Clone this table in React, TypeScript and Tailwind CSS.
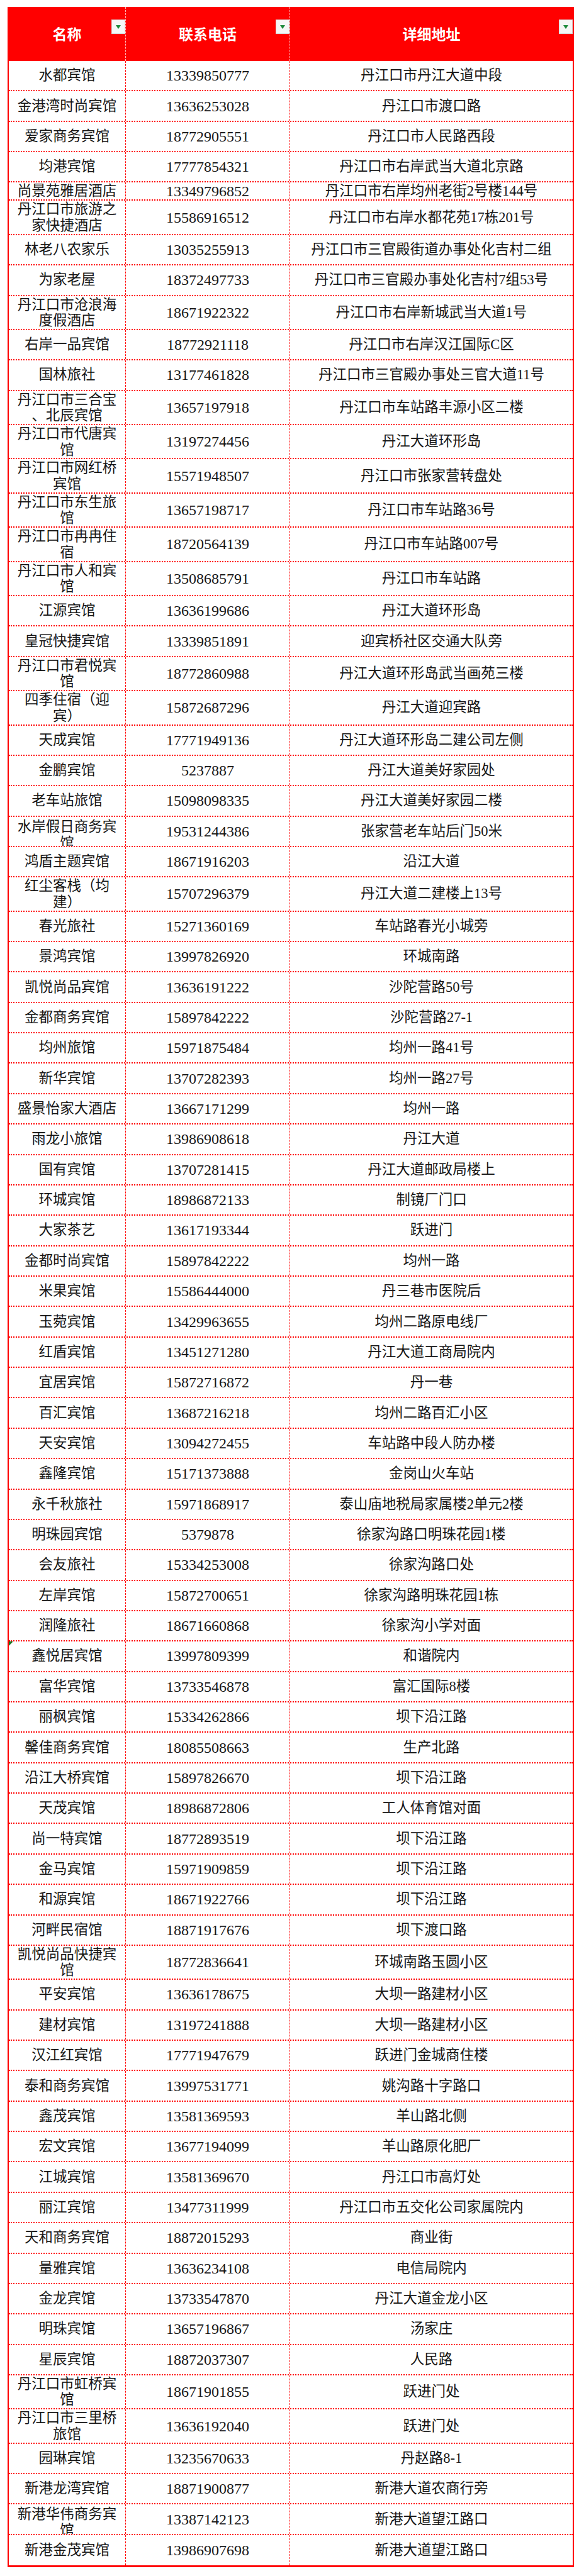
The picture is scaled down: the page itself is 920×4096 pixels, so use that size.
import React from "react";

type RowT = "s" | "d" | "x" | "c";
type Row = { n: string | string[]; p: string; a: string; t: RowT; g?: boolean };

const rows: Row[] = [
  { n: "水都宾馆", p: "13339850777", a: "丹江口市丹江大道中段", t: "s" },
  { n: "金港湾时尚宾馆", p: "13636253028", a: "丹江口市渡口路", t: "s" },
  { n: "爱家商务宾馆", p: "18772905551", a: "丹江口市人民路西段", t: "s" },
  { n: "均港宾馆", p: "17777854321", a: "丹江口市右岸武当大道北京路", t: "s" },
  { n: "尚景苑雅居酒店", p: "13349796852", a: "丹江口市右岸均州老街2号楼144号", t: "x" },
  { n: ["丹江口市旅游之", "家快捷酒店"], p: "15586916512", a: "丹江口市右岸水都花苑17栋201号", t: "d" },
  { n: "林老八农家乐", p: "13035255913", a: "丹江口市三官殿街道办事处化吉村二组", t: "s" },
  { n: "为家老屋", p: "18372497733", a: "丹江口市三官殿办事处化吉村7组53号", t: "s" },
  { n: ["丹江口市沧浪海", "度假酒店"], p: "18671922322", a: "丹江口市右岸新城武当大道1号", t: "d" },
  { n: "右岸一品宾馆", p: "18772921118", a: "丹江口市右岸汉江国际C区", t: "s" },
  { n: "国林旅社", p: "13177461828", a: "丹江口市三官殿办事处三官大道11号", t: "s" },
  { n: ["丹江口市三合宝", "、北辰宾馆"], p: "13657197918", a: "丹江口市车站路丰源小区二楼", t: "d" },
  { n: ["丹江口市代唐宾", "馆"], p: "13197274456", a: "丹江大道环形岛", t: "d" },
  { n: ["丹江口市网红桥", "宾馆"], p: "15571948507", a: "丹江口市张家营转盘处", t: "d" },
  { n: ["丹江口市东生旅", "馆"], p: "13657198717", a: "丹江口市车站路36号", t: "d" },
  { n: ["丹江口市冉冉住", "宿"], p: "18720564139", a: "丹江口市车站路007号", t: "d" },
  { n: ["丹江口市人和宾", "馆"], p: "13508685791", a: "丹江口市车站路", t: "d" },
  { n: "江源宾馆", p: "13636199686", a: "丹江大道环形岛", t: "s" },
  { n: "皇冠快捷宾馆", p: "13339851891", a: "迎宾桥社区交通大队旁", t: "s" },
  { n: ["丹江口市君悦宾", "馆"], p: "18772860988", a: "丹江大道环形岛武当画苑三楼", t: "d" },
  { n: ["四季住宿（迎", "宾）"], p: "15872687296", a: "丹江大道迎宾路", t: "d" },
  { n: "天成宾馆", p: "17771949136", a: "丹江大道环形岛二建公司左侧", t: "s" },
  { n: "金鹏宾馆", p: "5237887", a: "丹江大道美好家园处", t: "s" },
  { n: "老车站旅馆", p: "15098098335", a: "丹江大道美好家园二楼", t: "s" },
  { n: ["水岸假日商务宾", "馆"], p: "19531244386", a: "张家营老车站后门50米", t: "c" },
  { n: "鸿盾主题宾馆", p: "18671916203", a: "沿江大道", t: "s" },
  { n: ["红尘客栈（均", "建）"], p: "15707296379", a: "丹江大道二建楼上13号", t: "d" },
  { n: "春光旅社", p: "15271360169", a: "车站路春光小城旁", t: "s" },
  { n: "景鸿宾馆", p: "13997826920", a: "环城南路", t: "s" },
  { n: "凯悦尚品宾馆", p: "13636191222", a: "沙陀营路50号", t: "s" },
  { n: "金都商务宾馆", p: "15897842222", a: "沙陀营路27-1", t: "s" },
  { n: "均州旅馆", p: "15971875484", a: "均州一路41号", t: "s" },
  { n: "新华宾馆", p: "13707282393", a: "均州一路27号", t: "s" },
  { n: "盛景怡家大酒店", p: "13667171299", a: "均州一路", t: "s" },
  { n: "雨龙小旅馆", p: "13986908618", a: "丹江大道", t: "s" },
  { n: "国有宾馆", p: "13707281415", a: "丹江大道邮政局楼上", t: "s" },
  { n: "环城宾馆", p: "18986872133", a: "制镜厂门口", t: "s" },
  { n: "大家茶艺", p: "13617193344", a: "跃进门", t: "s" },
  { n: "金都时尚宾馆", p: "15897842222", a: "均州一路", t: "s" },
  { n: "米果宾馆", p: "15586444000", a: "丹三巷市医院后", t: "s" },
  { n: "玉菀宾馆", p: "13429963655", a: "均州二路原电线厂", t: "s" },
  { n: "红盾宾馆", p: "13451271280", a: "丹江大道工商局院内", t: "s" },
  { n: "宜居宾馆", p: "15872716872", a: "丹一巷", t: "s" },
  { n: "百汇宾馆", p: "13687216218", a: "均州二路百汇小区", t: "s" },
  { n: "天安宾馆", p: "13094272455", a: "车站路中段人防办楼", t: "s" },
  { n: "鑫隆宾馆", p: "15171373888", a: "金岗山火车站", t: "s" },
  { n: "永千秋旅社", p: "15971868917", a: "泰山庙地税局家属楼2单元2楼", t: "s" },
  { n: "明珠园宾馆", p: "5379878", a: "徐家沟路口明珠花园1楼", t: "s" },
  { n: "会友旅社", p: "15334253008", a: "徐家沟路口处", t: "s" },
  { n: "左岸宾馆", p: "15872700651", a: "徐家沟路明珠花园1栋", t: "s" },
  { n: "润隆旅社", p: "18671660868", a: "徐家沟小学对面", t: "s" },
  { n: "鑫悦居宾馆", p: "13997809399", a: "和谐院内", t: "s", g: true },
  { n: "富华宾馆", p: "13733546878", a: "富汇国际8楼", t: "s" },
  { n: "丽枫宾馆", p: "15334262866", a: "坝下沿江路", t: "s" },
  { n: "馨佳商务宾馆", p: "18085508663", a: "生产北路", t: "s" },
  { n: "沿江大桥宾馆", p: "15897826670", a: "坝下沿江路", t: "s" },
  { n: "天茂宾馆", p: "18986872806", a: "工人体育馆对面", t: "s" },
  { n: "尚一特宾馆", p: "18772893519", a: "坝下沿江路", t: "s" },
  { n: "金马宾馆", p: "15971909859", a: "坝下沿江路", t: "s" },
  { n: "和源宾馆", p: "18671922766", a: "坝下沿江路", t: "s" },
  { n: "河畔民宿馆", p: "18871917676", a: "坝下渡口路", t: "s" },
  { n: ["凯悦尚品快捷宾", "馆"], p: "18772836641", a: "环城南路玉圆小区", t: "d" },
  { n: "平安宾馆", p: "13636178675", a: "大坝一路建材小区", t: "s" },
  { n: "建材宾馆", p: "13197241888", a: "大坝一路建材小区", t: "s" },
  { n: "汉江红宾馆", p: "17771947679", a: "跃进门金城商住楼", t: "s" },
  { n: "泰和商务宾馆", p: "13997531771", a: "姚沟路十字路口", t: "s" },
  { n: "鑫茂宾馆", p: "13581369593", a: "羊山路北侧", t: "s" },
  { n: "宏文宾馆", p: "13677194099", a: "羊山路原化肥厂", t: "s" },
  { n: "江城宾馆", p: "13581369670", a: "丹江口市高灯处", t: "s" },
  { n: "丽江宾馆", p: "13477311999", a: "丹江口市五交化公司家属院内", t: "s" },
  { n: "天和商务宾馆", p: "18872015293", a: "商业街", t: "s" },
  { n: "量雅宾馆", p: "13636234108", a: "电信局院内", t: "s" },
  { n: "金龙宾馆", p: "13733547870", a: "丹江大道金龙小区", t: "s" },
  { n: "明珠宾馆", p: "13657196867", a: "汤家庄", t: "s" },
  { n: "星辰宾馆", p: "18872037307", a: "人民路", t: "s" },
  { n: ["丹江口市虹桥宾", "馆"], p: "18671901855", a: "跃进门处", t: "d" },
  { n: ["丹江口市三里桥", "旅馆"], p: "13636192040", a: "跃进门处", t: "d" },
  { n: "园琳宾馆", p: "13235670633", a: "丹赵路8-1", t: "s" },
  { n: "新港龙湾宾馆", p: "18871900877", a: "新港大道农商行旁", t: "s" },
  { n: ["新港华伟商务宾", "馆"], p: "13387142123", a: "新港大道望江路口", t: "c" },
  { n: "新港金茂宾馆", p: "13986907698", a: "新港大道望江路口", t: "s" },
];

const heightClass: Record<RowT, string> = {
  s: "h-[48.37px]",
  d: "h-[54.4px]",
  x: "h-[29px]",
  c: "h-[48.37px]",
};

function FilterButton() {
  return (
    <div className="absolute right-0 top-[20px] flex h-[23px] w-[22px] items-center justify-center border border-[#d4d4d4] bg-[#f6f6f6]">
      <svg width="8" height="6" viewBox="0 0 8 6">
        <polygon points="0,0 8,0 4,6" fill="#1e8a3c" />
      </svg>
    </div>
  );
}

function DataRow({ r, last }: { r: Row; last: boolean }) {
  const multi = Array.isArray(r.n);
  const clip = r.t === "c";
  return (
    <div
      className={`flex ${heightClass[r.t]} ${
        last ? "" : "border-b-2 border-dotted border-[#ff0000]"
      }`}
    >
      <div
        className={`relative flex w-[185px] shrink-0 justify-center text-[22.5px] ${
          multi ? "items-start" : "items-center"
        } ${clip ? "overflow-hidden pt-[3px]" : multi ? "pt-[1px]" : ""}`}
      >
        {r.g && (
          <svg className="absolute left-0 top-0" width="7" height="7" viewBox="0 0 7 7">
            <polygon points="0,0 7,0 0,7" fill="#1b7a25" />
          </svg>
        )}
        {multi ? (
          <div className={`flex flex-col items-center ${clip ? "leading-[26px]" : "leading-[25.5px]"}`}>
            {(r.n as string[]).map((l, i) => (
              <div key={i} className="whitespace-nowrap">
                {l}
              </div>
            ))}
          </div>
        ) : (
          <div className="whitespace-nowrap leading-[26px]">{r.n}</div>
        )}
      </div>
      <div className="flex w-[261px] shrink-0 items-center justify-center border-l border-dashed border-[#ff0000] text-[24px] leading-[26px]">
        {r.p}
      </div>
      <div className="flex flex-1 items-center justify-center whitespace-nowrap border-l border-dashed border-[#ff0000] text-[22.5px] leading-[26px]">
        {r.a}
      </div>
    </div>
  );
}

export default function App() {
  return (
    <div className="min-h-[4096px] w-[920px] bg-white pt-[11px] font-['Liberation_Serif','Noto_Sans_CJK_SC',serif] text-[#161616]">
      <div className="ml-[12px] w-[900px] border-x-2 border-b-[3px] border-[#ff0000]">
        <div className="flex h-[86px] bg-[#ff0000] text-[23px] font-bold text-white">
          <div className="relative flex w-[185px] shrink-0 items-center justify-center pt-[5px]">
            名称
            <FilterButton />
          </div>
          <div className="relative flex w-[261px] shrink-0 items-center justify-center border-l border-dashed border-[#ffb8b8] pt-[5px]">
            联系电话
            <FilterButton />
          </div>
          <div className="relative flex flex-1 items-center justify-center border-l border-dashed border-[#ffb8b8] pt-[5px]">
            详细地址
            <FilterButton />
          </div>
        </div>
        {rows.map((r, i) => (
          <DataRow key={i} r={r} last={i === rows.length - 1} />
        ))}
      </div>
    </div>
  );
}
